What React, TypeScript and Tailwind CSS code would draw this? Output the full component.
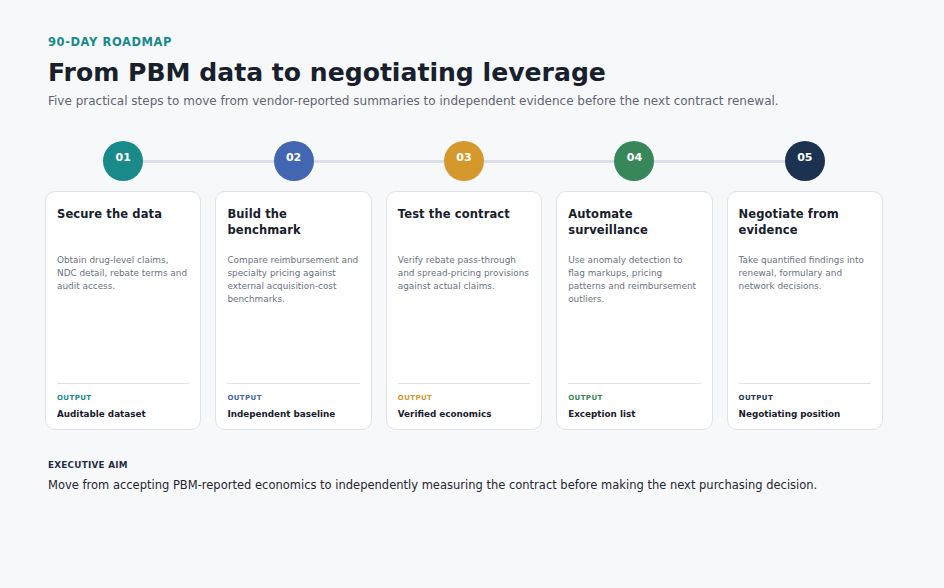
const steps = [
  {
    n: '01',
    title: 'Secure the data',
    body: 'Obtain drug-level claims, NDC detail, rebate terms and audit access.',
    output: 'Auditable dataset',
    dot: 'bg-[#188a8a]',
    label: 'text-[#188a8a]',
  },
  {
    n: '02',
    title: 'Build the benchmark',
    body: 'Compare reimbursement and specialty pricing against external acquisition-cost benchmarks.',
    output: 'Independent baseline',
    dot: 'bg-[#4266b1]',
    label: 'text-[#4266b1]',
  },
  {
    n: '03',
    title: 'Test the contract',
    body: 'Verify rebate pass-through and spread-pricing provisions against actual claims.',
    output: 'Verified economics',
    dot: 'bg-[#d5982d]',
    label: 'text-[#d5982d]',
  },
  {
    n: '04',
    title: 'Automate surveillance',
    body: 'Use anomaly detection to flag markups, pricing patterns and reimbursement outliers.',
    output: 'Exception list',
    dot: 'bg-[#37875a]',
    label: 'text-[#37875a]',
  },
  {
    n: '05',
    title: 'Negotiate from evidence',
    body: 'Take quantified findings into renewal, formulary and network decisions.',
    output: 'Negotiating position',
    dot: 'bg-[#1b3350]',
    label: 'text-[#1b3350]',
  },
];

export default function App() {
  return (
    <div className="min-h-screen bg-[#f7f8fa] pt-[35px] font-['DejaVu_Sans',sans-serif]">
      <div className="pl-[48px]">
        <p className="text-[11.5px] leading-[14px] font-bold tracking-[0.05em] text-[#188a8a]">
          90-DAY ROADMAP
        </p>
        <h1 className="mt-[8px] text-[25.1px] leading-[32px] font-bold text-[#18202c]">
          From PBM data to negotiating leverage
        </h1>
        <p className="mt-[4px] text-[12px] leading-[16px] text-[#5f6673]">
          Five practical steps to move from vendor-reported summaries to independent evidence before the next contract renewal.
        </p>
      </div>

      <div className="ml-[45px] w-[838px] mt-[32px]">
        <div className="relative grid grid-cols-5 gap-[14px]">
          <div className="absolute left-[78px] right-[78px] top-[19px] h-[3px] bg-[#dcdfe9]" />
          {steps.map((s) => (
            <div key={s.n} className="relative flex justify-center">
              <div
                className={`flex h-[40px] w-[40px] items-center justify-center rounded-full pb-[6px] text-[11px] font-bold text-white ${s.dot}`}
              >
                {s.n}
              </div>
            </div>
          ))}
        </div>

        <div className="mt-[10px] grid grid-cols-5 gap-[14px]">
          {steps.map((s) => (
            <div
              key={s.n}
              className="flex h-[239px] flex-col rounded-[10px] border border-[#dfe2e8] bg-white px-[11px] pt-[14px] pb-[9px]"
            >
              <h3 className="min-h-[32px] text-[11.5px] leading-[16px] font-bold tracking-[0.01em] text-[#18202c]">
                {s.title}
              </h3>
              <p className="mt-[16px] text-[8.9px] leading-[13px] text-[#6b7280]">{s.body}</p>
              <div className="mt-auto border-t border-[#dfe2e8] pt-[9px]">
                <p className={`text-[7px] leading-[10px] font-bold tracking-[0.06em] ${s.label}`}>OUTPUT</p>
                <p className="mt-[5px] text-[8.8px] leading-[12px] font-bold text-[#18202c]">{s.output}</p>
              </div>
            </div>
          ))}
        </div>
      </div>

      <div className="pl-[48px] mt-[29px]">
        <p className="text-[8.8px] leading-[12px] font-bold tracking-[0.03em] text-[#1e2f45]">EXECUTIVE AIM</p>
        <p className="mt-[6px] text-[11.5px] leading-[16px] text-[#1f2530]">
          Move from accepting PBM-reported economics to independently measuring the contract before making the next purchasing decision.
        </p>
      </div>
    </div>
  );
}
